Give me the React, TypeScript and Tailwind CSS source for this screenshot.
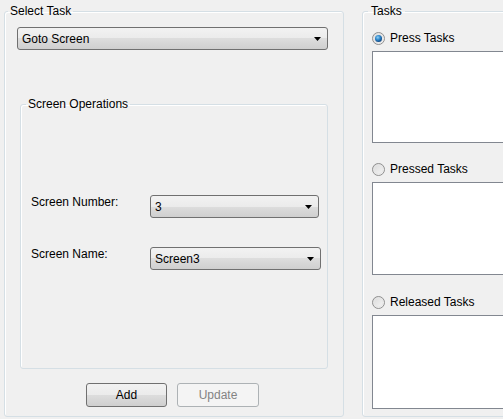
import React from "react";

const font = "font-['Liberation_Sans',Arial,sans-serif]";

// Win7-style drop down list
function Combo({ value, className = "" }: { value: string; className?: string }) {
  return (
    <div
      className={`flex h-[23px] items-center justify-between rounded-[3px] border border-[#707070] bg-[linear-gradient(to_bottom,#f2f2f2_0%,#ebebeb_50%,#dddddd_50%,#cfcfcf_100%)] pl-[4px] pr-[6px] text-[12px] leading-4 text-black ${className}`}
    >
      <span>{value}</span>
      <svg width="7" height="4" viewBox="0 0 7 4">
        <path d="M0 0H7L3.5 4Z" fill="#000" />
      </svg>
    </div>
  );
}

function Radio({ checked, label }: { checked?: boolean; label: string }) {
  return (
    <div className="ml-[9px] flex h-4 items-center gap-[5px] text-[12px] leading-4 text-black">
      <svg width="13" height="13" viewBox="0 0 13 13">
        <defs>
          <linearGradient id="rbg" x1="0" y1="0" x2="1" y2="1">
            <stop offset="0" stopColor="#d8d8d8" />
            <stop offset="1" stopColor="#f7f7f7" />
          </linearGradient>
          <radialGradient id="dot" cx="0.4" cy="0.35" r="0.7">
            <stop offset="0" stopColor="#8fd0f5" />
            <stop offset="0.5" stopColor="#2c85c9" />
            <stop offset="1" stopColor="#0b3e78" />
          </radialGradient>
        </defs>
        <circle cx="6.5" cy="6.5" r="6" fill="url(#rbg)" stroke="#8f8f8f" />
        <circle cx="6.5" cy="6.5" r="4.5" fill="none" stroke="#e6e6e6" />
        {checked && <circle cx="6.5" cy="6.5" r="3.5" fill="url(#dot)" />}
      </svg>
      <span>{label}</span>
    </div>
  );
}

function TaskList({ className = "" }: { className?: string }) {
  return <div className={`ml-[9px] mt-[5px] w-[160px] border border-[#828790] bg-white ${className}`} />;
}

export default function App() {
  return (
    <div className={`flex h-[419px] w-[503px] overflow-hidden bg-[#f0f0f0] text-[12px] text-black ${font}`}>
      {/* Select Task group */}
      <fieldset className="ml-[4px] mt-[3px] h-[414px] w-[340px] shrink-0 rounded-[3px] border border-[#d5dfe5] shadow-[inset_1px_1px_0_#ffffff]">
        <legend className="ml-[3px] px-[2px] leading-4">Select Task</legend>
        <Combo value="Goto Screen" className="ml-[12px] mt-[8px] w-[311px]" />

        <fieldset className="ml-[15px] mt-[46px] h-[273px] w-[308px] rounded-[3px] border border-[#d5dfe5] shadow-[inset_1px_1px_0_#ffffff]">
          <legend className="ml-[5px] px-[2px] leading-4">Screen Operations</legend>
          <div className="ml-[10px] mt-[82px] flex items-start">
            <span className="w-[119px] leading-4">Screen Number:</span>
            <Combo value="3" className="mt-[1px] w-[169px]" />
          </div>
          <div className="ml-[10px] mt-[28px] flex items-start">
            <span className="w-[119px] leading-4">Screen Name:</span>
            <Combo value="Screen3" className="mt-[1px] w-[171px]" />
          </div>
        </fieldset>

        <div className="ml-[81px] mt-[14px] flex gap-[10px]">
          <button className="h-[24px] w-[81px] rounded-[3px] border border-[#707070] bg-[linear-gradient(to_bottom,#f2f2f2_0%,#ebebeb_50%,#dddddd_50%,#cfcfcf_100%)] text-[12px] leading-4 text-black">
            Add
          </button>
          <button
            disabled
            className="h-[24px] w-[82px] rounded-[3px] border border-[#adb2b5] bg-[#f4f4f4] text-[12px] leading-4 text-[#838383]"
          >
            Update
          </button>
        </div>
      </fieldset>

      {/* Tasks group */}
      <fieldset className="ml-[18px] mt-[3px] h-[414px] w-[170px] shrink-0 rounded-[3px] border border-[#d5dfe5] shadow-[inset_1px_1px_0_#ffffff]">
        <legend className="ml-[5px] px-[3px] leading-4">Tasks</legend>
        <div className="mt-[11px]">
          <Radio checked label="Press Tasks" />
        </div>
        <TaskList className="h-[92px]" />
        <div className="mt-[18px]">
          <Radio label="Pressed Tasks" />
        </div>
        <TaskList className="h-[93px]" />
        <div className="mt-[19px]">
          <Radio label="Released Tasks" />
        </div>
        <TaskList className="h-[94px]" />
      </fieldset>
    </div>
  );
}
